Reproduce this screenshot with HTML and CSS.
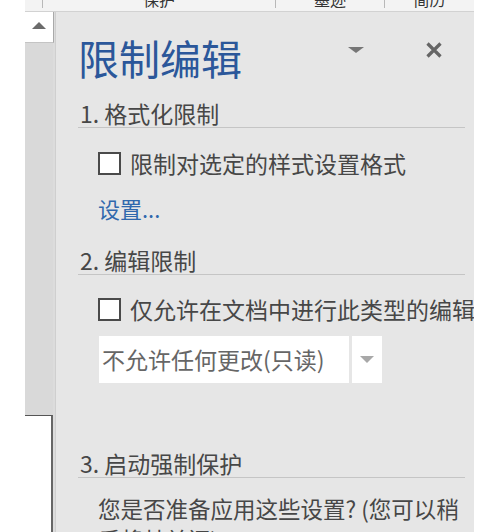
FILE: index.html
```html
<!DOCTYPE html>
<html lang="zh-CN">
<head>
<meta charset="utf-8">
<title>限制编辑</title>
<link rel="stylesheet" href="styles.css">
</head>
<body>
<div class="page">
  <div class="topbar">
    <div class="tcell tcell-a"></div>
    <div class="tcell tcell-b"><span class="tlabel">保护</span></div>
    <div class="tcell tcell-c"><span class="tlabel">墨迹</span></div>
    <div class="tcell tcell-d"><span class="tlabel">简历</span></div>
  </div>
  <div class="main">
    <div class="gutter"></div>
    <div class="scroll">
      <div class="scroll-up">
        <svg width="14" height="7" viewBox="0 0 14 7"><polygon points="0,7 14,7 7,0" fill="#6b6b6b"/></svg>
      </div>
      <div class="scroll-track"></div>
      <div class="scroll-doc"></div>
    </div>
    <div class="panel">
      <div class="hdr">
        <div class="title">限制编辑</div>
        <div class="hdr-actions">
          <svg class="hdr-icon" width="18" height="18" viewBox="0 0 18 18"><polygon points="1,6 17,6 9,12" fill="#767676"/></svg>
          <svg class="hdr-icon" width="18" height="18" viewBox="0 0 18 18"><path d="M2.5 2.5 L15.5 15.5 M15.5 2.5 L2.5 15.5" stroke="#666" stroke-width="3.2" fill="none"/></svg>
        </div>
      </div>

      <div class="sec-title sec-first">1. 格式化限制</div>
      <div class="check-row check-first"><span class="checkbox"></span><span>限制对选定的样式设置格式</span></div>
      <div class="link">设置...</div>

      <div class="sec-title sec-second">2. 编辑限制</div>
      <div class="check-row check-second"><span class="checkbox"></span><span>仅允许在文档中进行此类型的编辑</span></div>
      <div class="select-row">
        <div class="select-box">不允许任何更改(只读)</div>
        <div class="select-btn">
          <svg width="14" height="7" viewBox="0 0 14 7"><polygon points="0,0 14,0 7,7" fill="#a8a8a8"/></svg>
        </div>
      </div>

      <div class="sec-title sec-third">3. 启动强制保护</div>
      <div class="body-text">您是否准备应用这些设置? (您可以稍<br>后将其关闭)</div>
    </div>
    <div class="right-blank"></div>
  </div>
</div>
</body>
</html>
```

FILE: styles.css
```css
html, body {
  margin: 0;
  padding: 0;
  background: #ffffff;
}

.page {
  width: 500px;
  height: 532px;
  overflow: hidden;
  display: flex;
  flex-direction: column;
  font-family: "Noto Sans CJK SC", "Noto Sans", sans-serif;
}

.topbar {
  margin-left: 25px;
  width: 449px;
  height: 11px;
  flex: none;
  background: #f3f3f3;
  border-bottom: 1px solid #d2d2d2;
  display: flex;
  align-items: flex-start;
  overflow: hidden;
}

.tcell {
  height: 8px;
  overflow: hidden;
  border-right: 1px solid #b8b8b8;
  display: flex;
  justify-content: center;
  box-sizing: border-box;
}

.tcell-a { width: 18px; }
.tcell-b { width: 233px; }
.tcell-c { width: 109px; }
.tcell-d { width: 89px; border-right: none; }

.tlabel {
  font-size: 16px;
  line-height: 20px;
  margin-top: -11px;
  color: #333;
  white-space: nowrap;
}

.main {
  flex: 1;
  display: flex;
  min-height: 0;
}

.gutter {
  width: 25px;
  flex: none;
  background: #fff;
}

.scroll {
  width: 30px;
  flex: none;
  display: flex;
  flex-direction: column;
  background: #dcdcdc;
  border-right: 1px solid #cfcfcf;
}

.scroll-up {
  height: 31px;
  flex: none;
  background: #fff;
  border-right: 1px solid #a9a9a9;
  border-bottom: 1px solid #c4c4c4;
  box-sizing: border-box;
  width: 29px;
  display: flex;
  align-items: center;
  justify-content: center;
  padding-bottom: 3px;
}

.scroll-track {
  height: 372px;
  flex: none;
  background: #d9d9d9;
  width: 28px;
}

.scroll-doc {
  flex: 1;
  width: 28px;
  box-sizing: border-box;
  background: #fff;
  border-top: 1px solid #555;
  border-right: 2px solid #666;
}

.panel {
  width: 418px;
  flex: none;
  background: #e6e6e6;
  box-sizing: border-box;
  padding: 21px 9px 0 22px;
  overflow: hidden;
  color: #474747;
}

.right-blank {
  flex: 1;
  background: #fff;
}

.hdr {
  display: flex;
  align-items: flex-start;
  height: 48px;
}

.title {
  font-size: 41px;
  line-height: 48px;
  color: #2b579a;
  white-space: nowrap;
}

.hdr-actions {
  margin-left: auto;
  margin-right: 22px;
  margin-top: 8px;
  display: flex;
  gap: 60px;
}

.hdr-icon {
  display: block;
}

.sec-title {
  font-size: 23px;
  line-height: 28px;
  padding-left: 2px;
  border-bottom: 1px solid #c5c5c5;
  white-space: nowrap;
}

.sec-first { margin-top: 18px; }
.sec-second { margin-top: 24px; }
.sec-third { margin-top: 66px; }

.check-row {
  display: flex;
  align-items: center;
  gap: 9px;
  height: 30px;
  padding-left: 20px;
  font-size: 23px;
  white-space: nowrap;
}

.check-first { margin-top: 20px; }
.check-second { margin-top: 19px; }

.checkbox {
  width: 23px;
  height: 23px;
  flex: none;
  box-sizing: border-box;
  border: 2px solid #4a4a4a;
  background: #fff;
}

.link {
  margin-top: 16px;
  padding-left: 20px;
  font-size: 22px;
  line-height: 28px;
  color: #3068ad;
}

.select-row {
  margin-top: 12px;
  padding-left: 21px;
  display: flex;
  gap: 3px;
  height: 47px;
}

.select-box {
  width: 250px;
  background: #fff;
  box-sizing: border-box;
  padding-left: 3px;
  font-size: 23px;
  line-height: 47px;
  color: #666;
  white-space: nowrap;
}

.select-btn {
  width: 30px;
  background: #fff;
  display: flex;
  align-items: center;
  justify-content: center;
}

.body-text {
  margin-top: 15px;
  padding-left: 20px;
  font-size: 22.5px;
  line-height: 31px;
  white-space: nowrap;
}
```
